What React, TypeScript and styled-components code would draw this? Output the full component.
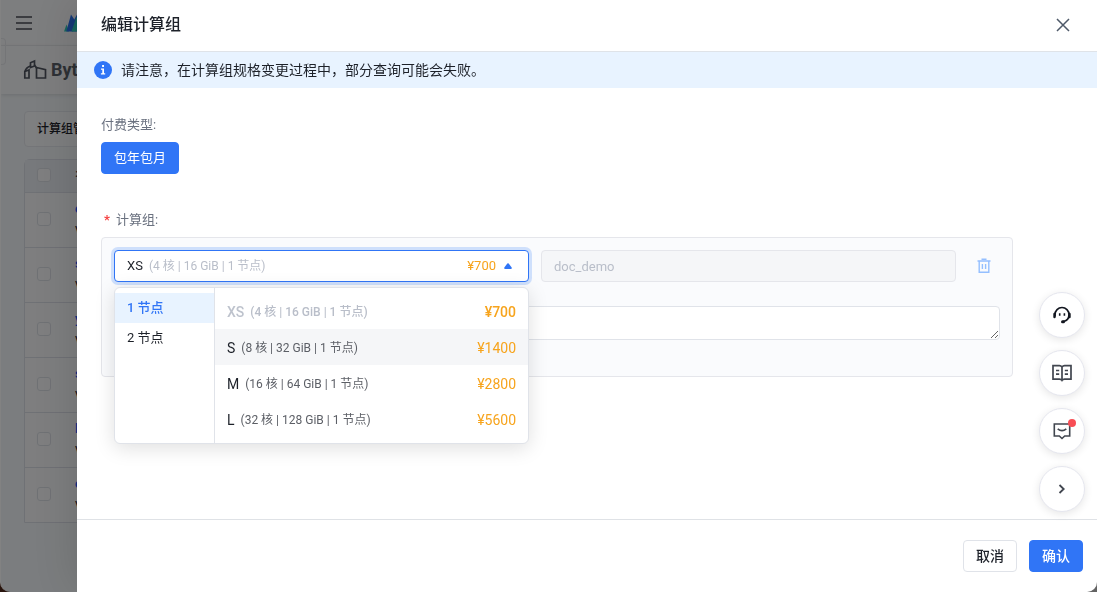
import React from 'react';
import styled, { createGlobalStyle, css } from 'styled-components';

const GlobalStyle = createGlobalStyle`
  *, *::before, *::after { box-sizing: border-box; }
  html, body { margin: 0; height: 100%; }
  body {
    background: linear-gradient(90deg, #50281a 50%, #c8c8c8 50%);
    color: #1d2129;
    font: 13px/20px Roboto, "Noto Sans CJK SC", sans-serif;
  }
  button, input, select, textarea { font: inherit; color: inherit; margin: 0; }
  button { cursor: pointer; }
`;

/* ---------- console page behind the drawer ---------- */

const Console = styled.div`
  position: relative;
  height: 100vh;
  overflow: hidden;
  background: #f2f6f9;
  border-left: 1px solid #ffffff;
  border-radius: 0 0 10px 10px;
`;

const TopBar = styled.header`
  display: flex;
  align-items: center;
  gap: 31px;
  height: 46px;
  padding: 0 15px;
  background: #f6f7f9;
  border-bottom: 1px solid #e9ebee;
`;

const MenuButton = styled.button`
  display: flex;
  padding: 0;
  border: 0;
  background: none;
`;

const SideHandle = styled.span`
  position: absolute;
  top: 38px;
  left: 0;
  width: 5px;
  height: 27px;
  border: 1px solid #e4e6ea;
  border-left: 0;
  border-radius: 0 4px 4px 0;
`;

const ProductBar = styled.div`
  display: flex;
  align-items: center;
  gap: 4px;
  height: 48px;
  padding: 0 22px;
  background: #f6f7f9;
  box-shadow: 0 1px 4px rgba(0, 0, 0, 0.12);
  color: #5a5f68;
  font-size: 18px;
  font-weight: 700;
`;

const ConsoleBody = styled.main`
  display: flex;
  flex-direction: column;
  gap: 12px;
  padding: 17px 23px;
`;

const ListTitle = styled.h2`
  margin: 0;
  padding: 7px 12px;
  border: 1px solid #e3e6ec;
  border-radius: 4px;
  background: #f7f9fb;
  font-size: 12px;
  line-height: 20px;
  font-weight: 500;
`;

const ClusterTable = styled.table`
  width: 100%;
  border: 1px solid #dadde6;
  border-radius: 6px 6px 0 0;
  border-spacing: 0;
  background: #f7f8fa;
  th, td { padding: 0 12px 2px; text-align: left; font-weight: 400; }
  th { height: 33px; background: #e9edf3; border-bottom: 1px solid #dadde6; }
  td { height: 55px; border-bottom: 1px solid #dadde6; }
  tr:last-child td { height: 54px; border-bottom: 0; }
  tr > :first-child { width: 38px; padding-right: 0; }
  tr > :last-child { padding-left: 12px; }
  input {
    display: block;
    appearance: none;
    width: 14px;
    height: 14px;
    margin: 0;
    border: 1px solid #dcdfe6;
    border-radius: 3px;
    background: #f9fafb;
  }
`;

const ClusterLink = styled.a`
  display: block;
  color: #165dff;
  font-weight: 500;
  text-decoration: none;
`;

const Mask = styled.div`
  position: fixed;
  inset: 0;
  background: rgba(0, 0, 0, 0.49);
`;

/* ---------- drawer ---------- */

const Drawer = styled.section`
  position: fixed;
  inset: 0 0 0 77px;
  display: flex;
  flex-direction: column;
  background: #ffffff;
  border-bottom-right-radius: 10px;
  box-shadow: -4px 0 48px rgba(0, 0, 0, 0.14);
`;

const DrawerHeader = styled.header`
  display: flex;
  align-items: center;
  justify-content: space-between;
  height: 52px;
  padding: 0 26px 1px 24px;
  border-bottom: 1px solid #dfe3e8;
`;

const Title = styled.h1`
  margin: 0;
  font-size: 16px;
  line-height: 24px;
  font-weight: 500;
`;

const CloseButton = styled.button`
  display: flex;
  padding: 0;
  border: 0;
  background: none;
  color: #4e5969;
`;

const Notice = styled.div`
  display: flex;
  align-items: center;
  gap: 9px;
  height: 36px;
  padding: 0 17px;
  background: #e8f3ff;
  font-size: 14px;
`;

const DrawerBody = styled.form`
  flex: 1;
  display: flex;
  flex-direction: column;
  gap: 36px;
  padding: 27px 84px 24px 24px;
`;

const Field = styled.div`
  display: flex;
  flex-direction: column;
  align-items: flex-start;
  gap: 7px;
`;

const FieldLabel = styled.span`
  display: flex;
  gap: 5px;
  color: #6b7280;
`;

const Required = styled.span`
  width: 10px;
  padding-left: 3px;
  color: #f53f3f;
  font-weight: 700;
`;

const Button = styled.button<{ $primary?: boolean; $small?: boolean }>`
  height: 32px;
  padding: 0 12px;
  border: 1px solid #e0e3e9;
  border-radius: 4px;
  background: #ffffff;
  font-size: 14px;
  font-weight: 500;
  ${p => p.$small && css`
    font-size: 13px;
    font-weight: 400;
  `}
  ${p => p.$primary && css`
    border-color: #3075f6;
    background: #3075f6;
    color: #ffffff;
  `}
`;

const GroupCard = styled.div`
  width: 100%;
  display: grid;
  grid-template-columns: 1fr 1fr 32px;
  gap: 24px 12px;
  padding: 12px 12px 36px;
  border: 1px solid #e5e6eb;
  border-radius: 4px;
  background: #fafbfd;
`;

const SpecPicker = styled.div`
  position: relative;
  display: grid;
  > * { grid-area: 1 / 1; }
`;

const SpecSelect = styled.select`
  appearance: none;
  width: 100%;
  height: 32px;
  padding: 0 12px;
  border: 1px solid #3075f6;
  border-radius: 4px;
  outline: 0;
  background: #ffffff;
  box-shadow: 0 0 0 3px #cfe0fc;
`;

const SpecSummary = styled.div`
  display: flex;
  align-items: center;
  gap: 8px;
  padding: 0 17px 0 35px;
  pointer-events: none;
`;

const Detail = styled.span`
  flex: 1;
  font-size: 12px;
  text-align: left;
  color: #b9bec9;
`;

const Price = styled.span`
  color: #f7a41d;
`;

const Popup = styled.div`
  position: absolute;
  top: 37px;
  left: 0;
  right: 0;
  z-index: 2;
  display: grid;
  grid-template-columns: 100px 1fr;
  border: 1px solid #e0e3e9;
  border-radius: 6px;
  background: #ffffff;
  box-shadow: 0 4px 20px rgba(0, 0, 0, 0.13);
  overflow: hidden;
`;

const PopupColumn = styled.div`
  display: flex;
  flex-direction: column;
  padding: 5px 0 6px;
  &:first-child { border-right: 1px solid #e0e3e9; }
`;

const NodeOption = styled.button<{ $active?: boolean }>`
  height: 30px;
  padding: 0 12px;
  border: 0;
  text-align: left;
  background: ${p => (p.$active ? '#e8f3ff' : 'none')};
  color: ${p => (p.$active ? '#3075f6' : '#1d2129')};
  font-weight: ${p => (p.$active ? 500 : 400)};
`;

const SpecOption = styled.button<{ $hover?: boolean }>`
  display: flex;
  align-items: center;
  gap: 6px;
  height: 36px;
  padding: 2px 12px 0;
  border: 0;
  background: ${p => (p.$hover ? '#f5f6f8' : 'none')};
  font-size: 14px;
  ${Detail} { color: #5c5f66; }
  &:disabled { color: #bec3cd; font-weight: 500; }
  &:disabled ${Detail} { color: #b9bec9; }
`;

const NameInput = styled.input`
  width: 100%;
  height: 32px;
  padding: 0 12px;
  border: 1px solid #e5e6eb;
  border-radius: 4px;
  background: #f5f6f8;
  &:disabled { color: #b9bec9; }
`;

const DeleteButton = styled.button`
  display: flex;
  align-items: center;
  justify-content: center;
  padding: 0;
  border: 0;
  background: none;
  color: #94bfff;
`;

const Remark = styled.textarea`
  grid-column: 1 / -1;
  display: block;
  width: 100%;
  height: 34px;
  padding: 6px 12px;
  border: 1px solid #e0e3e9;
  border-radius: 4px;
  background: #ffffff;
  resize: vertical;
`;

const DrawerFooter = styled.footer`
  display: flex;
  justify-content: flex-end;
  gap: 12px;
  padding: 20px 14px;
  border-top: 1px solid #dfe2e6;
`;

/* ---------- floating help buttons ---------- */

const HelpDock = styled.nav`
  position: fixed;
  right: 12px;
  bottom: 80px;
  display: flex;
  flex-direction: column;
  gap: 12px;
`;

const HelpButton = styled.button`
  position: relative;
  display: flex;
  align-items: center;
  justify-content: center;
  width: 46px;
  height: 46px;
  padding: 0;
  border: 1px solid #e5e6ee;
  border-radius: 50%;
  background: #ffffff;
  color: #41464f;
  box-shadow: 0 2px 8px rgba(0, 0, 0, 0.1);
`;

const Dot = styled.span`
  position: absolute;
  top: 10px;
  right: 8px;
  width: 8px;
  height: 8px;
  border-radius: 50%;
  background: #f84e55;
`;

/* ---------- icons ---------- */

const MenuIcon = () => (
  <svg width="17" height="14" viewBox="0 0 17 14" stroke="#4a4e55" strokeWidth="1.5">
    <path d="M0 1h16M0 7h16M0 13h16" />
  </svg>
);

const PeaksIcon = () => (
  <svg width="26" height="20" viewBox="0 0 26 20">
    <path d="M0 18.500l2.500-7L5 18.500z" fill="#2fc6b8" />
    <path d="M2.300 18.500L7 1.500l4 6L8.500 18.500z" fill="#2a6fe8" />
    <path d="M10 7L13 1.500l8 17H8z" fill="#2a6fe8" />
    <path d="M7.500 18.500L12.500 4l6 14.500z" fill="#2fc6b8" />
  </svg>
);

const HouseIcon = () => (
  <svg width="24" height="22" viewBox="0 1 24 22" fill="none" stroke="#505560" strokeWidth="1.700">
    <path d="M1.800 13.500L6 12v8H1.800z" />
    <path d="M7.500 4.700l4-1.700v5l-4 1.500z" />
    <path d="M2 13.500Q3 9.500 7.500 8M11.500 7l2 3" />
    <path d="M13.500 9.500l9 2.200V20h-9z" />
  </svg>
);

const InfoIcon = () => (
  <svg width="18" height="18" viewBox="0 0 18 18">
    <circle cx="9" cy="9" r="9" fill="#3075f6" />
    <path d="M8.100 4h1.900v1.900H8.100zM7 7.400h3v4.900h1.200v1.300H6.900v-1.300h1.400V8.700H7z" fill="#ffffff" />
  </svg>
);

const CloseIcon = () => (
  <svg width="16" height="16" viewBox="0 0 16 16" fill="none" stroke="currentColor" strokeWidth="1.500">
    <path d="M2 2l12 12M14 2L2 14" />
  </svg>
);

const CaretIcon = () => (
  <svg width="8" height="6" viewBox="0 0 8 6">
    <path d="M3.300.6Q4 0 4.700.6L7.700 4.600Q8 6 7 6H1Q0 6 .3 4.600z" fill="#3075f6" />
  </svg>
);

const TrashIcon = () => (
  <svg width="14" height="16" viewBox="0 0 14 16" fill="none" stroke="currentColor" strokeWidth="1.400">
    <path d="M.5 3h13M4.500 1.200h5M2.200 3v11.300h9.600V3M5.400 6v5M8.600 6v5" />
  </svg>
);

const HeadsetIcon = () => (
  <svg width="18" height="18" viewBox="0 0 18 18" fill="none" stroke="#12161f" strokeWidth="1.700">
    <path d="M2 10.500V8.500a7 7 0 0 1 14 0c0 4-2 6.400-6 7" />
    <path d="M1.500 8v3M16.500 8v3" strokeWidth="2.400" strokeLinecap="round" />
    <path d="M9.500 15.700h1" strokeWidth="3" strokeLinecap="round" />
    <path d="M6.700 7.300v2.400M11.400 7.300v2.400" strokeWidth="1.600" />
  </svg>
);

const BookIcon = () => (
  <svg width="20" height="18" viewBox="0 0 20 18" fill="none" stroke="currentColor" strokeWidth="1.700">
    <path d="M10 3Q9 1.700 7.500 1.700H1v13.500h6.500q1.700 0 2.500 1.200q.8-1.200 2.500-1.200H19V1.700h-6.500Q11 1.700 10 3zM10 3v13" />
    <path d="M4 6.500h3.200M4 10.200h3.200M12.800 6.500H16M12.800 10.200H16" />
  </svg>
);

const FeedbackIcon = () => (
  <svg width="18" height="18" viewBox="0 0 18 18" fill="none" stroke="currentColor" strokeWidth="1.600">
    <path d="M1.300 2h15.400v12h-5L9 16.500 6.300 14h-5z" />
    <path d="M4.700 6.800q4.300 3.600 8.600 0" />
  </svg>
);

const ChevronIcon = () => (
  <svg width="8" height="10" viewBox="0 0 8 10" fill="none" stroke="currentColor" strokeWidth="1.800">
    <path d="M1.500 1l4.200 4-4.200 4" />
  </svg>
);

/* ---------- data ---------- */

const clusters = ['cdw', 'st', 'yx', 'st', 'lw', 'cdw'];

const specs = [
  { name: 'XS', detail: '(4 核 | 16 GiB | 1 节点)', price: '¥700', disabled: true },
  { name: 'S', detail: '(8 核 | 32 GiB | 1 节点)', price: '¥1400', hover: true },
  { name: 'M', detail: '(16 核 | 64 GiB | 1 节点)', price: '¥2800' },
  { name: 'L', detail: '(32 核 | 128 GiB | 1 节点)', price: '¥5600' },
];

export default function App() {
  return (
    <>
      <GlobalStyle />
      <Console aria-hidden="true">
        <TopBar>
          <MenuButton aria-label="菜单"><MenuIcon /></MenuButton>
          <PeaksIcon />
        </TopBar>
        <SideHandle />
        <ProductBar><HouseIcon />Byte</ProductBar>
        <ConsoleBody>
          <ListTitle>计算组管理</ListTitle>
          <ClusterTable>
            <thead>
              <tr>
                <th><input type="checkbox" aria-label="全选" /></th>
                <th>名称</th>
              </tr>
            </thead>
            <tbody>
              {clusters.map((name, i) => (
                <tr key={i}>
                  <td><input type="checkbox" aria-label={name} /></td>
                  <td><ClusterLink href="#">{name}</ClusterLink>vw</td>
                </tr>
              ))}
            </tbody>
          </ClusterTable>
        </ConsoleBody>
      </Console>
      <Mask />

      <Drawer role="dialog" aria-labelledby="drawer-title">
        <DrawerHeader>
          <Title id="drawer-title">编辑计算组</Title>
          <CloseButton aria-label="关闭"><CloseIcon /></CloseButton>
        </DrawerHeader>
        <Notice role="status">
          <InfoIcon />
          请注意，在计算组规格变更过程中，部分查询可能会失败。
        </Notice>
        <DrawerBody>
          <Field>
            <FieldLabel>付费类型:</FieldLabel>
            <Button type="button" $primary $small>包年包月</Button>
          </Field>
          <Field>
            <FieldLabel as="label" htmlFor="spec">
              <Required>*</Required>计算组:
            </FieldLabel>
            <GroupCard>
              <SpecPicker>
                <SpecSelect id="spec" defaultValue="XS">
                  {specs.map(s => <option key={s.name}>{s.name}</option>)}
                </SpecSelect>
                <SpecSummary>
                  <Detail>{specs[0].detail}</Detail>
                  <Price>{specs[0].price}</Price>
                  <CaretIcon />
                </SpecSummary>
                <Popup>
                  <PopupColumn>
                    <NodeOption type="button" $active>1 节点</NodeOption>
                    <NodeOption type="button">2 节点</NodeOption>
                  </PopupColumn>
                  <PopupColumn>
                    {specs.map(s => (
                      <SpecOption key={s.name} type="button" disabled={s.disabled} $hover={s.hover}>
                        {s.name}
                        <Detail>{s.detail}</Detail>
                        <Price>{s.price}</Price>
                      </SpecOption>
                    ))}
                  </PopupColumn>
                </Popup>
              </SpecPicker>
              <NameInput aria-label="名称" defaultValue="doc_demo" disabled />
              <DeleteButton type="button" aria-label="删除"><TrashIcon /></DeleteButton>
              <Remark aria-label="描述" />
            </GroupCard>
          </Field>
        </DrawerBody>
        <DrawerFooter>
          <Button type="button">取消</Button>
          <Button type="button" $primary>确认</Button>
        </DrawerFooter>
      </Drawer>

      <HelpDock aria-label="帮助">
        <HelpButton aria-label="客服"><HeadsetIcon /></HelpButton>
        <HelpButton aria-label="文档"><BookIcon /></HelpButton>
        <HelpButton aria-label="反馈"><FeedbackIcon /><Dot /></HelpButton>
        <HelpButton aria-label="展开"><ChevronIcon /></HelpButton>
      </HelpDock>
    </>
  );
}
